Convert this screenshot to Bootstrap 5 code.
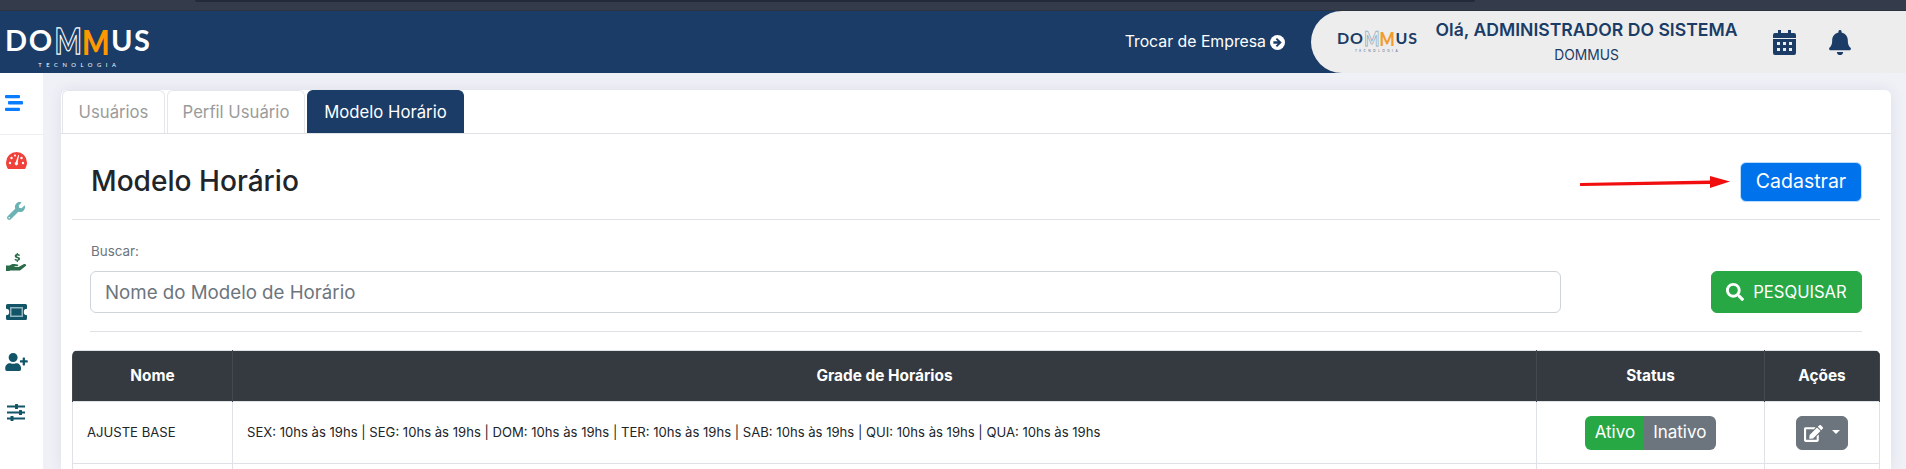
<!DOCTYPE html>
<html lang="pt-BR">

<head>
	<meta charset="utf-8">
	<meta name="viewport" content="width=device-width, initial-scale=1">
	<title>Modelo Horário</title>
	<link href="https://cdn.jsdelivr.net/npm/bootstrap@5.3.3/dist/css/bootstrap.min.css" rel="stylesheet">
	<script src="https://cdn.jsdelivr.net/npm/bootstrap@5.3.3/dist/js/bootstrap.bundle.min.js"></script>
	<style>
		html, body {
			height: 100%;
			overflow: hidden;
		}

		body {
			background-color: #f0f1f7;
			font-family: Inter, "Open Sans", sans-serif;
			color: #212529;
		}

		.top-strip {
			height: 11px;
			background-color: #343b4a;
			border-bottom: 1px solid #2c3240;
		}

		.top-strip-inner {
			height: 2px;
			margin: 0 431px 0 195px;
			background-color: #232a39;
			border-radius: 0 0 6px 6px;
		}

		.app-header {
			height: 62px;
			background-color: #1a3c66;
		}

		.brand-mark {
			font-family: Lato, sans-serif;
			font-weight: 700;
			line-height: 1;
			white-space: nowrap;
			color: #fff;
		}

		.brand-main {
			letter-spacing: .055em;
		}

		.brand-open {
			display: inline-block;
			color: transparent;
			-webkit-text-stroke: 1px #fff;
			letter-spacing: 0;
			transform: scaleY(1.25);
			margin-left: .03em;
		}

		.brand-fill {
			display: inline-block;
			color: #ff9800;
			font-weight: 900;
			letter-spacing: 0;
			transform: translateY(.06em) scaleY(1.18);
			margin-right: .05em;
		}

		.brand-sub {
			font-size: .2em;
			letter-spacing: .78em;
			font-weight: 400;
			margin-top: 1.3em;
			padding-left: .8em;
		}

		.brand-large {
			font-size: 29px;
			width: 144px;
			margin-left: 5px;
			margin-top: 14px;
		}

		.brand-small {
			font-size: 16px;
			width: 81px;
			color: #1a3c66;
		}

		.brand-small .brand-open {
			-webkit-text-stroke: .6px #8e9fb5;
		}

		.brand-small .brand-fill {
			color: #f39c2d;
		}

		.brand-small .brand-sub {
			font-size: .2em;
			color: #53698a;
			padding-left: 0;
		}

		.switch-company {
			font-size: 15.8px;
			color: #fff;
			margin-right: 26px;
		}

		.user-pill {
			width: 595px;
			background-color: #ededed;
			border-radius: 36px 0 0 36px;
			padding-left: 26px;
			color: #1a3c66;
		}

		.user-hello {
			font-size: 17.6px;
			font-weight: 600;
			line-height: 1;
			white-space: nowrap;
		}

		.user-company {
			font-size: 13.8px;
			line-height: 1;
			margin-top: 11px;
		}

		.user-text {
			margin-left: 18px;
			width: 301px;
		}

		.pill-icon-calendar {
			width: 23px;
			height: 25px;
			margin-left: 36px;
		}

		.pill-icon-bell {
			width: 22px;
			height: 25px;
			margin-left: 33px;
		}

		.side-menu {
			width: 43px;
			background-color: #fff;
		}

		.side-toggle {
			height: 62px;
			border-bottom: 1px solid #eeeff3;
			padding: 22px 0 0 5px;
		}

		.side-icon {
			display: block;
			margin-left: auto;
			margin-right: auto;
		}

		.side-list {
			padding: 17px 11px 0 0;
			gap: 33px;
		}

		.page-main {
			padding: 17px 15px 0 18px;
		}

		.main-panel {
			background-color: #fff;
			border-radius: 6px 6px 0 0;
			box-shadow: 0 0 14px rgba(60, 70, 110, .1);
			height: calc(100vh - 90px);
			overflow: hidden;
		}

		.panel-tabs {
			height: 44px;
			padding-left: 1px;
			gap: 2px;
			border-bottom: 1px solid #dee2e6;
		}

		.panel-tabs .nav-link {
			height: 43px;
			margin: 0;
			padding: 0;
			font-size: 16.7px;
			line-height: 42px;
			text-align: center;
			color: #9b9b9b;
			background-color: #fff;
			border: 1px solid #e4e6ea;
			border-bottom: 0;
			border-radius: 6px 6px 0 0;
		}

		.panel-tabs .nav-link.active {
			color: #fff;
			background-color: #1a3c66;
			border-color: #1a3c66;
		}

		.tab-users {
			width: 103px;
		}

		.tab-profile {
			width: 138px;
		}

		.tab-schedule {
			width: 157px;
		}

		.title-row {
			height: 86px;
			margin: 0 11px;
			padding: 10px 18px 0 19px;
			border-bottom: 1px solid #dee2e6;
		}

		.title-text {
			font-size: 28.1px;
			font-weight: 500;
		}

		.mark-arrow {
			width: 150px;
			height: 12px;
			margin-right: 10px;
		}

		.btn-register {
			width: 122px;
			height: 40px;
			padding: 0;
			font-size: 19.5px;
			background-color: #0072ec;
			border: 1px solid #bcdcfb;
		}

		.search-row {
			margin: 0 29px;
			padding: 21px 0 18px;
			border-bottom: 1px solid #dee2e6;
		}

		.search-label {
			font-size: 13.4px;
			color: #6c757d;
			line-height: 20px;
			margin: 0 0 0 1px;
			display: block;
			height: 30px;
		}

		.search-input {
			height: 42px;
			font-size: 18.7px;
			padding: 0 14px;
			border-color: #ced4da;
		}

		.search-input::placeholder {
			color: #6c757d;
		}

		.btn-search {
			width: 151px;
			height: 42px;
			padding: 0;
			margin-left: 150px;
			font-size: 16.6px;
			background-color: #28a745;
			border-color: #28a745;
			flex-shrink: 0;
		}

		.btn-search svg {
			width: 18px;
			height: 18px;
			margin-right: 9px;
			vertical-align: -3px;
		}

		.grid-wrap {
			margin: 18px 11px 0;
		}

		.grid-table {
			table-layout: fixed;
			margin: 0;
			font-size: 13.1px;
		}

		.grid-table th {
			--bs-table-bg: #343a40;
			color: #fff;
			height: 51px;
			font-size: 15.4px;
			font-weight: 700;
			text-align: center;
			vertical-align: middle;
			border-color: #45494f;
		}

		.grid-table td {
			height: 62px;
			vertical-align: middle;
			padding: 0 14px;
		}

		.col-name {
			width: 160px;
		}

		.col-status {
			width: 228px;
		}

		.col-actions {
			width: 115px;
		}

		.status-group .btn {
			height: 34px;
			padding: 0 9.5px;
			font-size: 17px;
			--bs-btn-border-width: 0;
		}

		.status-on {
			background-color: #28a745;
		}

		.btn-row-action {
			width: 52px;
			height: 34px;
			padding: 0;
			background-color: #6c757d;
			border-color: #6c757d;
		}

		.btn-row-action svg {
			width: 19px;
			height: 17px;
			vertical-align: -3px;
		}
	</style>
</head>

<body>
<div class="top-strip">
	<div class="top-strip-inner"></div>
</div>

<header class="app-header d-flex justify-content-between">
	<div class="brand-mark brand-large">
		<div class="brand-main d-flex align-items-center"><span>DO</span><span class="brand-open">M</span><span class="brand-fill">M</span><span>US</span></div>
		<div class="brand-sub text-center">TECNOLOGIA</div>
	</div>
	<div class="d-flex align-items-center">
		<div class="switch-company d-flex align-items-center gap-1">
			Trocar de Empresa
			<svg width="15" height="15" viewBox="0 0 16 16"><circle cx="8" cy="8" r="8" fill="#fff"/><path d="M7.5 3.2 12.5 8l-5 4.8-1.4-1.4L8.3 9.4H3.6V6.6h4.7L6.100 4.600z" fill="#1a3c66"/></svg>
		</div>
		<div class="user-pill h-100 d-flex align-items-center">
			<div class="brand-mark brand-small flex-shrink-0">
				<div class="brand-main d-flex align-items-center"><span>DO</span><span class="brand-open">M</span><span class="brand-fill">M</span><span>US</span></div>
				<div class="brand-sub text-center">TECNOLOGIA</div>
			</div>
			<div class="user-text d-flex flex-column align-items-center flex-shrink-0">
				<div class="user-hello">Olá, ADMINISTRADOR DO SISTEMA</div>
				<div class="user-company">DOMMUS</div>
			</div>
			<svg class="pill-icon-calendar" viewBox="0 0 23 25" fill="#1a3c66">
				<path d="M5 0h3v3h7V0h3v3h3a2 2 0 0 1 2 2v3H0V5a2 2 0 0 1 2-2h3z"/>
				<path fill-rule="evenodd" d="M0 9h23v14a2 2 0 0 1-2 2H2a2 2 0 0 1-2-2zM4 12v3h3v-3zm6 0v3h3v-3zm6 0v3h3v-3zM4 18v3h3v-3zm6 0v3h3v-3zm6 0v3h3v-3z"/>
			</svg>
			<svg class="pill-icon-bell" viewBox="0 0 448 512" fill="#1a3c66"><path d="M224 512c35.32 0 63.97-28.65 63.97-64H160.03c0 35.35 28.65 64 63.97 64zm215.39-149.71c-19.32-20.76-55.47-51.99-55.47-154.29 0-77.7-54.48-139.9-127.94-155.16V32c0-17.67-14.32-32-31.98-32s-31.98 14.33-31.98 32v20.84C118.56 68.1 64.08 130.3 64.08 208c0 102.3-36.15 133.53-55.47 154.29-6 6.45-8.66 14.16-8.61 21.71.11 16.4 12.98 32 32.1 32h383.8c19.12 0 32-15.6 32.1-32 .05-7.55-2.61-15.27-8.61-21.71z"/></svg>
		</div>
	</div>
</header>

<div class="d-flex">
	<aside class="side-menu flex-shrink-0">
		<div class="side-toggle">
			<svg class="d-block" width="18" height="16" viewBox="0 0 18 17" preserveAspectRatio="none" fill="#0a7cff"><rect x="0" y="0" width="15" height="3.400" rx="1"/><rect x="3" y="6.500" width="15" height="3.600" rx="1"/><rect x="0" y="13.500" width="15" height="3.400" rx="1"/></svg>
		</div>
		<div class="side-list d-flex flex-column">
			<svg class="side-icon" width="21" height="17" viewBox="0 0 21 17">
				<path d="M10.500 0A10.500 10.500 0 0 1 21 10.500c0 2.500-.8 4.700-2 6.500H2C.8 15.200 0 13 0 10.500A10.500 10.500 0 0 1 10.500 0z" fill="#f0413a"/>
				<g fill="#fff"><circle cx="4" cy="11" r="1.200"/><circle cx="5.500" cy="6" r="1.200"/><circle cx="15.500" cy="6" r="1.200"/><circle cx="17" cy="11" r="1.200"/><circle cx="9" cy="3.500" r="1"/><path d="M12.200 3 13 3.200 11.700 10.500a1.700 1.700 0 1 1-1.900-.5z"/></g>
			</svg>
			<svg class="side-icon" width="18" height="18" viewBox="0 0 512 512" fill="#6bb2b5"><path d="M507.73 109.1c-2.24-9.03-13.54-12.09-20.12-5.51l-74.36 74.36-67.88-11.31-11.31-67.88 74.36-74.36c6.62-6.62 3.43-17.9-5.66-20.16-47.38-11.74-99.55.91-136.58 37.93-39.64 39.64-50.55 97.1-34.05 147.2L18.74 402.76c-24.99 24.99-24.99 65.51 0 90.5 24.99 24.99 65.51 24.99 90.5 0l213.21-213.21c50.12 16.71 107.47 5.68 147.37-34.22 37.07-37.07 49.7-89.32 37.91-136.73zM64 472c-13.25 0-24-10.75-24-24 0-13.26 10.75-24 24-24s24 10.74 24 24c0 13.25-10.75 24-24 24z"/></svg>
			<svg class="side-icon" width="21" height="18" viewBox="0 0 21 18" fill="#2b6b4a">
				<path d="M0 12.500h3.500c1.500-1.300 3.200-1.800 5-1.500l3 .5c1 .2 1.200 1.700-.3 1.800H8.500v.8h4l5.500-3c1.500-.7 3 .8 1.700 2l-5 3.800c-.5.300-1 .6-1.700.6H4L3.500 18H0z"/>
				<path d="M10.700 0h1.200v1.100c.9.100 1.600.4 2.100.8l-.6 1.100c-.6-.4-1.200-.6-1.900-.6-.5 0-.8.200-.8.500 0 .9 3.400.6 3.400 2.900 0 1-.7 1.800-2.200 2V9h-1.200V7.800c-1-.1-1.800-.5-2.300-1l.7-1.100c.6.500 1.300.8 2.100.8.600 0 .9-.2.900-.6 0-1-3.400-.6-3.400-2.900 0-1 .7-1.700 2-1.900z"/>
			</svg>
			<svg class="side-icon" width="21" height="16" viewBox="0 0 21 16">
				<path d="M1.500 0h18A1.500 1.500 0 0 1 21 1.500v3.300a3.200 3.200 0 0 0 0 6.400v3.300a1.500 1.500 0 0 1-1.500 1.500h-18A1.500 1.500 0 0 1 0 14.500v-3.300a3.200 3.200 0 0 0 0-6.400V1.500A1.500 1.500 0 0 1 1.500 0z" fill="#125468"/>
				<path fill-rule="evenodd" d="M4 3h13v10H4zm1.500 1.500v7h10v-7z" fill="#8fb6bf"/>
			</svg>
			<svg class="side-icon" width="23" height="18" viewBox="0 0 640 512" fill="#125468"><path d="M624 208h-64v-64c0-8.800-7.200-16-16-16h-32c-8.800 0-16 7.200-16 16v64h-64c-8.800 0-16 7.200-16 16v32c0 8.800 7.200 16 16 16h64v64c0 8.800 7.200 16 16 16h32c8.800 0 16-7.200 16-16v-64h64c8.800 0 16-7.200 16-16v-32c0-8.800-7.200-16-16-16zm-400 48c70.700 0 128-57.300 128-128S294.700 0 224 0 96 57.300 96 128s57.300 128 128 128zm89.600 32h-16.700c-22.200 10.200-46.900 16-72.900 16s-50.600-5.800-72.900-16h-16.700C60.200 288 0 348.200 0 422.400V464c0 26.500 21.500 48 48 48h352c26.500 0 48-21.500 48-48v-41.600c0-74.200-60.200-134.400-134.400-134.400z"/></svg>
			<svg class="side-icon" width="18" height="17" viewBox="0 0 18 17" fill="#125468"><rect y="1.500" width="18" height="2"/><rect y="7.500" width="18" height="2"/><rect y="13.500" width="18" height="2"/><rect x="8" y="0" width="3" height="5" rx=".5"/><rect x="12" y="6" width="3" height="5" rx=".5"/><rect x="3.500" y="12" width="3" height="5" rx=".5"/></svg>
		</div>
	</aside>

	<main class="page-main flex-grow-1">
		<div class="main-panel">
			<ul class="nav nav-tabs panel-tabs">
				<li class="nav-item"><a class="nav-link tab-users" href="#">Usuários</a></li>
				<li class="nav-item"><a class="nav-link tab-profile" href="#">Perfil Usuário</a></li>
				<li class="nav-item"><a class="nav-link active tab-schedule" href="#">Modelo Horário</a></li>
			</ul>

			<div class="title-row d-flex align-items-center justify-content-between">
				<h1 class="title-text m-0">Modelo Horário</h1>
				<div class="d-flex align-items-center">
					<svg class="mark-arrow" viewBox="0 0 150 12"><path d="M1 7 130 4.500V0l20 5.500L130 12V8L1 10a1.500 1.500 0 0 1 0-3z" fill="#f00e0e"/></svg>
					<button type="button" class="btn btn-primary btn-register">Cadastrar</button>
				</div>
			</div>

			<div class="search-row">
				<label class="search-label" for="busca">Buscar:</label>
				<div class="d-flex">
					<input type="text" class="form-control search-input" id="busca" placeholder="Nome do Modelo de Horário">
					<button type="button" class="btn btn-success btn-search">
						<svg viewBox="0 0 512 512" fill="#fff"><path d="M505 442.700L405.300 343c-4.500-4.500-10.600-7-17-7H372c27.600-35.300 44-79.700 44-128C416 93.100 322.900 0 208 0S0 93.100 0 208s93.100 208 208 208c48.300 0 92.700-16.400 128-44v16.300c0 6.400 2.500 12.500 7 17l99.700 99.700c9.400 9.400 24.600 9.400 33.900 0l28.300-28.300c9.400-9.400 9.400-24.600.1-34zM208 336c-70.700 0-128-57.200-128-128 0-70.700 57.200-128 128-128 70.700 0 128 57.200 128 128 0 70.700-57.200 128-128 128z"/></svg>PESQUISAR
					</button>
				</div>
			</div>

			<div class="grid-wrap rounded-top overflow-hidden">
				<table class="table table-bordered grid-table">
					<colgroup>
						<col class="col-name">
						<col>
						<col class="col-status">
						<col class="col-actions">
					</colgroup>
					<thead>
					<tr>
						<th>Nome</th>
						<th>Grade de Horários</th>
						<th>Status</th>
						<th>Ações</th>
					</tr>
					</thead>
					<tbody>
					<tr>
						<td>AJUSTE BASE</td>
						<td>SEX: 10hs às 19hs | SEG: 10hs às 19hs | DOM: 10hs às 19hs | TER: 10hs às 19hs | SAB: 10hs às 19hs | QUI: 10hs às 19hs | QUA: 10hs às 19hs</td>
						<td class="text-center">
							<div class="btn-group status-group">
								<button type="button" class="btn btn-success status-on">Ativo</button>
								<button type="button" class="btn btn-secondary">Inativo</button>
							</div>
						</td>
						<td class="text-center">
							<button type="button" class="btn btn-secondary btn-row-action dropdown-toggle">
								<svg viewBox="0 0 576 512" fill="#fff"><path d="M402.600 83.200l90.200 90.200c3.800 3.800 3.800 10 0 13.800L274.400 405.600l-92.800 10.300c-12.400 1.400-22.900-9.100-21.500-21.500l10.300-92.800L388.800 83.200c3.800-3.800 10-3.800 13.800 0zm162-22.900l-48.800-48.800c-15.200-15.200-39.900-15.200-55.200 0l-35.400 35.400c-3.800 3.800-3.800 10 0 13.800l90.200 90.200c3.800 3.800 10 3.800 13.800 0l35.400-35.400c15.200-15.300 15.200-40 0-55.200zM384 346.200V448H64V128h229.800c3.200 0 6.200-1.300 8.500-3.500l40-40c7.600-7.600 2.200-20.500-8.500-20.500H48C21.500 64 0 85.500 0 112v352c0 26.500 21.500 48 48 48h352c26.500 0 48-21.500 48-48V306.200c0-10.700-12.900-16-20.500-8.500l-40 40c-2.200 2.300-3.500 5.300-3.500 8.500z"/></svg>
							</button>
						</td>
					</tr>
					<tr>
						<td></td>
						<td></td>
						<td></td>
						<td></td>
					</tr>
					</tbody>
				</table>
			</div>
		</div>
	</main>
</div>
</body>
</html>
